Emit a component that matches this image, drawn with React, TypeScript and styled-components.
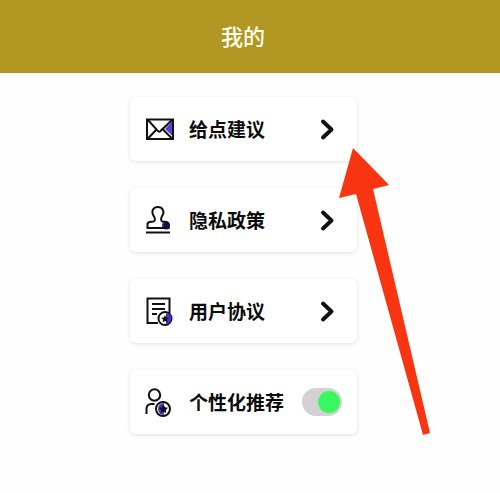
import React, { useState } from "react";
import styled, { createGlobalStyle } from "styled-components";

const GlobalStyle = createGlobalStyle`
  *, *::before, *::after { box-sizing: border-box; }
  body {
    margin: 0;
    background: #fefefe;
    font-family: "Noto Sans CJK SC", sans-serif;
  }
`;

const Header = styled.header`
  display: flex;
  align-items: center;
  justify-content: center;
  height: 73px;
  padding: 0 14px 4px 0;
  background: #b29622;
`;

const Title = styled.h1`
  margin: 0;
  color: #fffef0;
  font-size: 22px;
  font-weight: 500;
  line-height: 32px;
`;

const Main = styled.main`
  display: flex;
  justify-content: center;
  padding: 24px 13px 24px 0;
`;

const Menu = styled.div`
  position: relative;
  display: flex;
  flex-direction: column;
  gap: 27px;
  width: 46%;
  min-width: 227px;
`;

const Row = styled.div`
  display: flex;
  align-items: center;
  gap: 14px;
  width: 100%;
  height: 64px;
  padding: 0 15px;
  border: 0;
  border-radius: 6px;
  background: #fff;
  box-shadow: 0 1px 4px rgba(0, 0, 0, 0.12);
  color: #0c0c0c;
  font-family: inherit;
  text-align: left;
`;

const RowButton = styled(Row).attrs({ as: "button", type: "button" })`
  cursor: pointer;
`;

const Label = styled.span`
  flex: 1;
  font-size: 19px;
  font-weight: 700;
  line-height: 28px;
  white-space: nowrap;
`;

const Icon = styled.svg`
  flex: none;
  width: 30px;
  height: 30px;
  fill: none;
  stroke: #111;
  stroke-width: 2;
`;

const Switch = styled.input`
  flex: none;
  appearance: none;
  display: flex;
  align-items: center;
  justify-content: flex-start;
  width: 40px;
  height: 28px;
  margin: 0;
  padding: 0 2px;
  border-radius: 14px;
  background: #d2d2d2;
  cursor: pointer;

  &::before {
    content: "";
    width: 22px;
    height: 22px;
    border-radius: 50%;
    background: #fff;
  }

  &:checked { justify-content: flex-end; }
  &:checked::before { background: #38f85f; }
`;

const Pointer = styled.svg`
  position: absolute;
  top: 51px;
  left: 209px;
  width: 92px;
  height: 287px;
  pointer-events: none;
`;

const MailIcon = () => (
  <Icon viewBox="0 0 30 30" aria-hidden="true">
    <path d="M27.5 7 20 15l7.500 7z" fill="#5a3fd0" stroke="none" />
    <rect x="2" y="5.500" width="26" height="19.500" />
    <path d="m3 6 9.500 10.500c1 1.500 2.500 1.500 3.500 0L27 6M3 24.500l8.500-9M27 24.500l-9-9" />
  </Icon>
);

const StampIcon = () => (
  <Icon viewBox="0 0 30 30" aria-hidden="true">
    <circle cx="21" cy="20.500" r="4" fill="#3422a8" stroke="none" />
    <path d="M2.500 23v-3.800c0-1.200.800-2 2-2.200l4-.600c1.600-.400 1.800-2.300.700-4.500C5.500 6.500 8 2 12.800 2s7.500 4.500 4.100 9.400c-1.300 2.200-1 4.500.600 5l3.800.600c1.400.300 2.300 1 2.300 2.400V23z" />
    <circle cx="21" cy="20.500" r="2.500" fill="#17104e" stroke="none" />
    <path d="M1 27.500h24" />
  </Icon>
);

const DocumentIcon = () => (
  <Icon viewBox="0 0 30 30" aria-hidden="true">
    <path d="M13 27H2.500V2.500h22V17M7 8h13M7 13h13M7 18h5" />
    <circle cx="20" cy="22.500" r="6.500" fill="#fff" />
    <path d="M21 17a5.500 5.500 0 0 1 0 11z" fill="#4a30c4" stroke="none" />
    <path d="m20 19 1.200 2.400 2.600.300-1.900 1.800.500 2.700-2.400-1.300-2.400 1.300.500-2.700-1.900-1.800 2.600-.300z" fill="#111" stroke="none" />
  </Icon>
);

const PersonIcon = () => (
  <Icon viewBox="0 0 30 30" aria-hidden="true">
    <circle cx="9.500" cy="8" r="5.700" />
    <path d="M1.500 27v-5c0-3 1.500-5 5-5h3" />
    <circle cx="18" cy="22" r="7" fill="#fff" />
    <path d="M19 16a6 6 0 1 0 0 12z" fill="#4a30c4" stroke="none" />
    <path d="m18.500 17.500 1.500 2.700 3 .600-2.100 2.200.400 3.100-2.800-1.300-2.800 1.300.400-3.100-2.100-2.200 3-.600z" fill="#111" stroke="none" />
  </Icon>
);

const Chevron = () => (
  <Icon viewBox="0 0 30 30" aria-hidden="true">
    <path d="m11 7.500 8.500 8-8.500 8" strokeWidth="4" strokeLinecap="round" strokeLinejoin="round" />
  </Icon>
);

const links = [
  { label: "给点建议", Glyph: MailIcon },
  { label: "隐私政策", Glyph: StampIcon },
  { label: "用户协议", Glyph: DocumentIcon },
];

export default function App() {
  const [personalized, setPersonalized] = useState(true);
  return (
    <>
      <GlobalStyle />
      <Header>
        <Title>我的</Title>
      </Header>
      <Main>
        <Menu>
          {links.map(({ label, Glyph }) => (
            <RowButton key={label}>
              <Glyph />
              <Label>{label}</Label>
              <Chevron />
            </RowButton>
          ))}
          <Row>
            <PersonIcon />
            <Label as="label" htmlFor="personalized">个性化推荐</Label>
            <Switch
              id="personalized"
              type="checkbox"
              checked={personalized}
              onChange={(event) => setPersonalized(event.target.checked)}
            />
          </Row>
          <Pointer viewBox="0 0 92 287" aria-hidden="true">
            <path d="M14 0 50 37 34 41 91 285 84 287 17 46 0 50z" fill="#f83510" />
          </Pointer>
        </Menu>
      </Main>
    </>
  );
}
